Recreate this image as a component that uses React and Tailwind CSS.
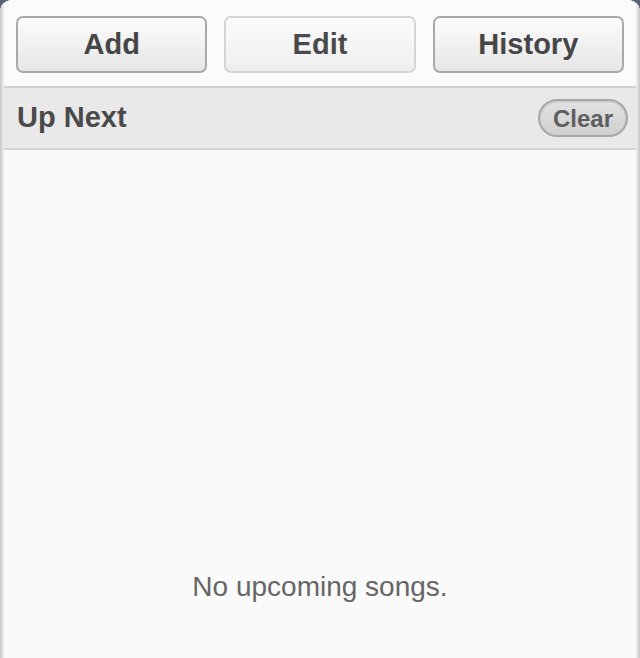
import React from 'react';

const TopButton = ({ label, disabled }) => (
    <button
        className={ disabled
            ? 'flex-1 h-[57px] rounded-[7px] border-2 border-[#d4d4d4] bg-gradient-to-b from-[#fcfcfc] to-[#eeeeee] text-[29px] font-bold text-[#4a4a4a]'
            : 'flex-1 h-[57px] rounded-[7px] border-2 border-[#a9a9a9] bg-gradient-to-b from-[#fcfcfc] to-[#e6e6e6] text-[29px] font-bold text-[#464646]' }
    >
        { label }
    </button>
);

const App = () => {
    return (
        <div className='w-[640px] h-[658px] bg-[#5a6478] overflow-hidden' style={ { fontFamily: '"Liberation Sans", Arial, sans-serif' } }>
            <div className='relative w-full h-full flex flex-col rounded-t-[12px] bg-[#fafafa] overflow-hidden'>
                <div className='absolute left-0 top-0 bottom-0 w-[4px] bg-gradient-to-r from-[#c8c8c8] to-[#f0f0f0]' />
                <div className='absolute right-0 top-0 bottom-0 w-[4px] bg-gradient-to-l from-[#c8c8c8] to-[#f0f0f0]' />
                <div className='flex flex-row gap-[17px] px-[16px] pt-[16px] pb-[13px] bg-[#fbfbfb]'>
                    <TopButton label='Add' />
                    <TopButton label='Edit' disabled />
                    <TopButton label='History' />
                </div>
                <div className='h-[64px] flex flex-row items-center justify-between pl-[17px] pr-[12px] bg-[#e9e9e9] border-t-2 border-b-2 border-[#d2d2d2]'>
                    <span className='text-[29px] font-bold text-[#4a4a4a]'>Up Next</span>
                    <button className='w-[90px] h-[38px] rounded-full border-2 border-[#a8a8a8] bg-gradient-to-b from-[#e2e2e2] to-[#d0d0d0] text-[24px] font-bold text-[#5e5e5e] shadow-[inset_0_1px_2px_rgba(0,0,0,0.15)]'>
                        Clear
                    </button>
                </div>
                <div className='flex-1 flex flex-col justify-end items-center pb-[50px]'>
                    <span className='text-[28px] text-[#666666]'>No upcoming songs.</span>
                </div>
            </div>
        </div>
    );
};

export default App;
